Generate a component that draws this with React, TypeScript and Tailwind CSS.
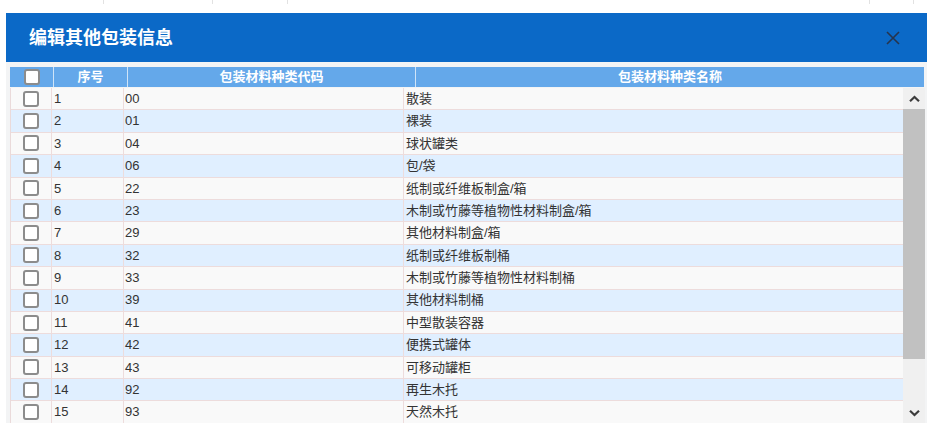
const rows: [string, string][] = [
  ["00", "散装"],
  ["01", "裸装"],
  ["04", "球状罐类"],
  ["06", "包/袋"],
  ["22", "纸制或纤维板制盒/箱"],
  ["23", "木制或竹藤等植物性材料制盒/箱"],
  ["29", "其他材料制盒/箱"],
  ["32", "纸制或纤维板制桶"],
  ["33", "木制或竹藤等植物性材料制桶"],
  ["39", "其他材料制桶"],
  ["41", "中型散装容器"],
  ["42", "便携式罐体"],
  ["43", "可移动罐柜"],
  ["92", "再生木托"],
  ["93", "天然木托"],
];

function Box() {
  return <div className="w-[16px] h-[16px] rounded-[3px] border-2 border-[#8c8c8c] bg-white" />;
}

function Chevron({ down }: { down?: boolean }) {
  return (
    <svg width="11" height="8" viewBox="0 0 11 8" className={down ? "rotate-180" : ""}>
      <path d="M1 6.3 L5.5 2 L10 6.3" fill="none" stroke="#3c3c3c" strokeWidth="2.2" />
    </svg>
  );
}

export default function App() {
  return (
    <div className="relative w-[937px] h-[434px] overflow-hidden bg-white font-['Liberation_Sans','Noto_Sans_CJK_SC',sans-serif]">
      {/* faint marks of the page behind the dialog */}
      <div className="absolute top-0 left-[103px] w-px h-[4px] bg-[#e2e2e2]" />
      <div className="absolute top-0 left-[212px] w-px h-[4px] bg-[#e2e2e2]" />
      <div className="absolute top-0 left-[287px] w-px h-[4px] bg-[#e2e2e2]" />
      <div className="absolute top-0 left-[869px] w-px h-[4px] bg-[#e2e2e2]" />
      <div className="absolute top-0 left-[913px] w-px h-[4px] bg-[#e2e2e2]" />

      <div className="mt-[13px] ml-[6px] w-[921px]">
        {/* Title bar */}
        <div className="flex h-[49px] items-center justify-between bg-[#0b69c7] pl-[23px] pr-[27px]">
          <span className="text-[18px] font-bold text-white leading-none">编辑其他包装信息</span>
          <svg width="14" height="14" viewBox="0 0 14 14">
            <path d="M1 1 L13 13 M13 1 L1 13" stroke="#26344d" strokeWidth="1.6" />
          </svg>
        </div>

        {/* Body */}
        <div className="bg-[#f3f4f5] pt-[5px] pl-[4px] pr-[2px]">
          {/* Table header */}
          <div className="flex h-[20px] w-[914px] bg-[#64a8ea] text-[13px] font-bold text-white">
            <div className="flex w-[44px] items-center justify-center border-r border-[#cfe4f8]">
              <Box />
            </div>
            <div className="flex w-[74px] items-center justify-center border-r border-[#cfe4f8]">序号</div>
            <div className="flex w-[288px] items-center justify-center border-r border-[#cfe4f8]">包装材料种类代码</div>
            <div className="flex flex-1 items-center justify-center">包装材料种类名称</div>
          </div>

          {/* Table body */}
          <div className="flex h-[335px] w-[915px] bg-white mt-px">
            <div className="w-[893px] overflow-hidden border-l border-[#eadada]">
              {rows.map(([code, name], i) => (
                <div
                  key={code}
                  className={`flex h-[22.4px] border-b border-[#eddcdc] text-[13px] text-[#333] ${
                    i % 2 === 1 ? "bg-[#e0efff]" : i === 7 ? "bg-[#f4f4f4]" : "bg-[#f9f9f9]"
                  }`}
                >
                  <div className="flex w-[41px] items-center justify-center border-r border-[#eddcdc]">
                    <Box />
                  </div>
                  <div className="flex w-[72px] items-center pl-[2px] border-r border-[#eddcdc]">{i + 1}</div>
                  <div className="flex w-[280px] items-center pl-[1px] border-r border-[#eddcdc]">{code}</div>
                  <div className="flex flex-1 items-center pl-[2px]">{name}</div>
                </div>
              ))}
            </div>

            {/* Scrollbar */}
            <div className="flex w-[22px] flex-col bg-[#f0f0f0]">
              <div className="flex h-[21px] items-center justify-center">
                <Chevron />
              </div>
              <div className="h-[250px] bg-[#c1c1c1]" />
              <div className="flex-1" />
              <div className="flex h-[20px] items-center justify-center">
                <Chevron down />
              </div>
            </div>
          </div>
        </div>
      </div>
    </div>
  );
}
